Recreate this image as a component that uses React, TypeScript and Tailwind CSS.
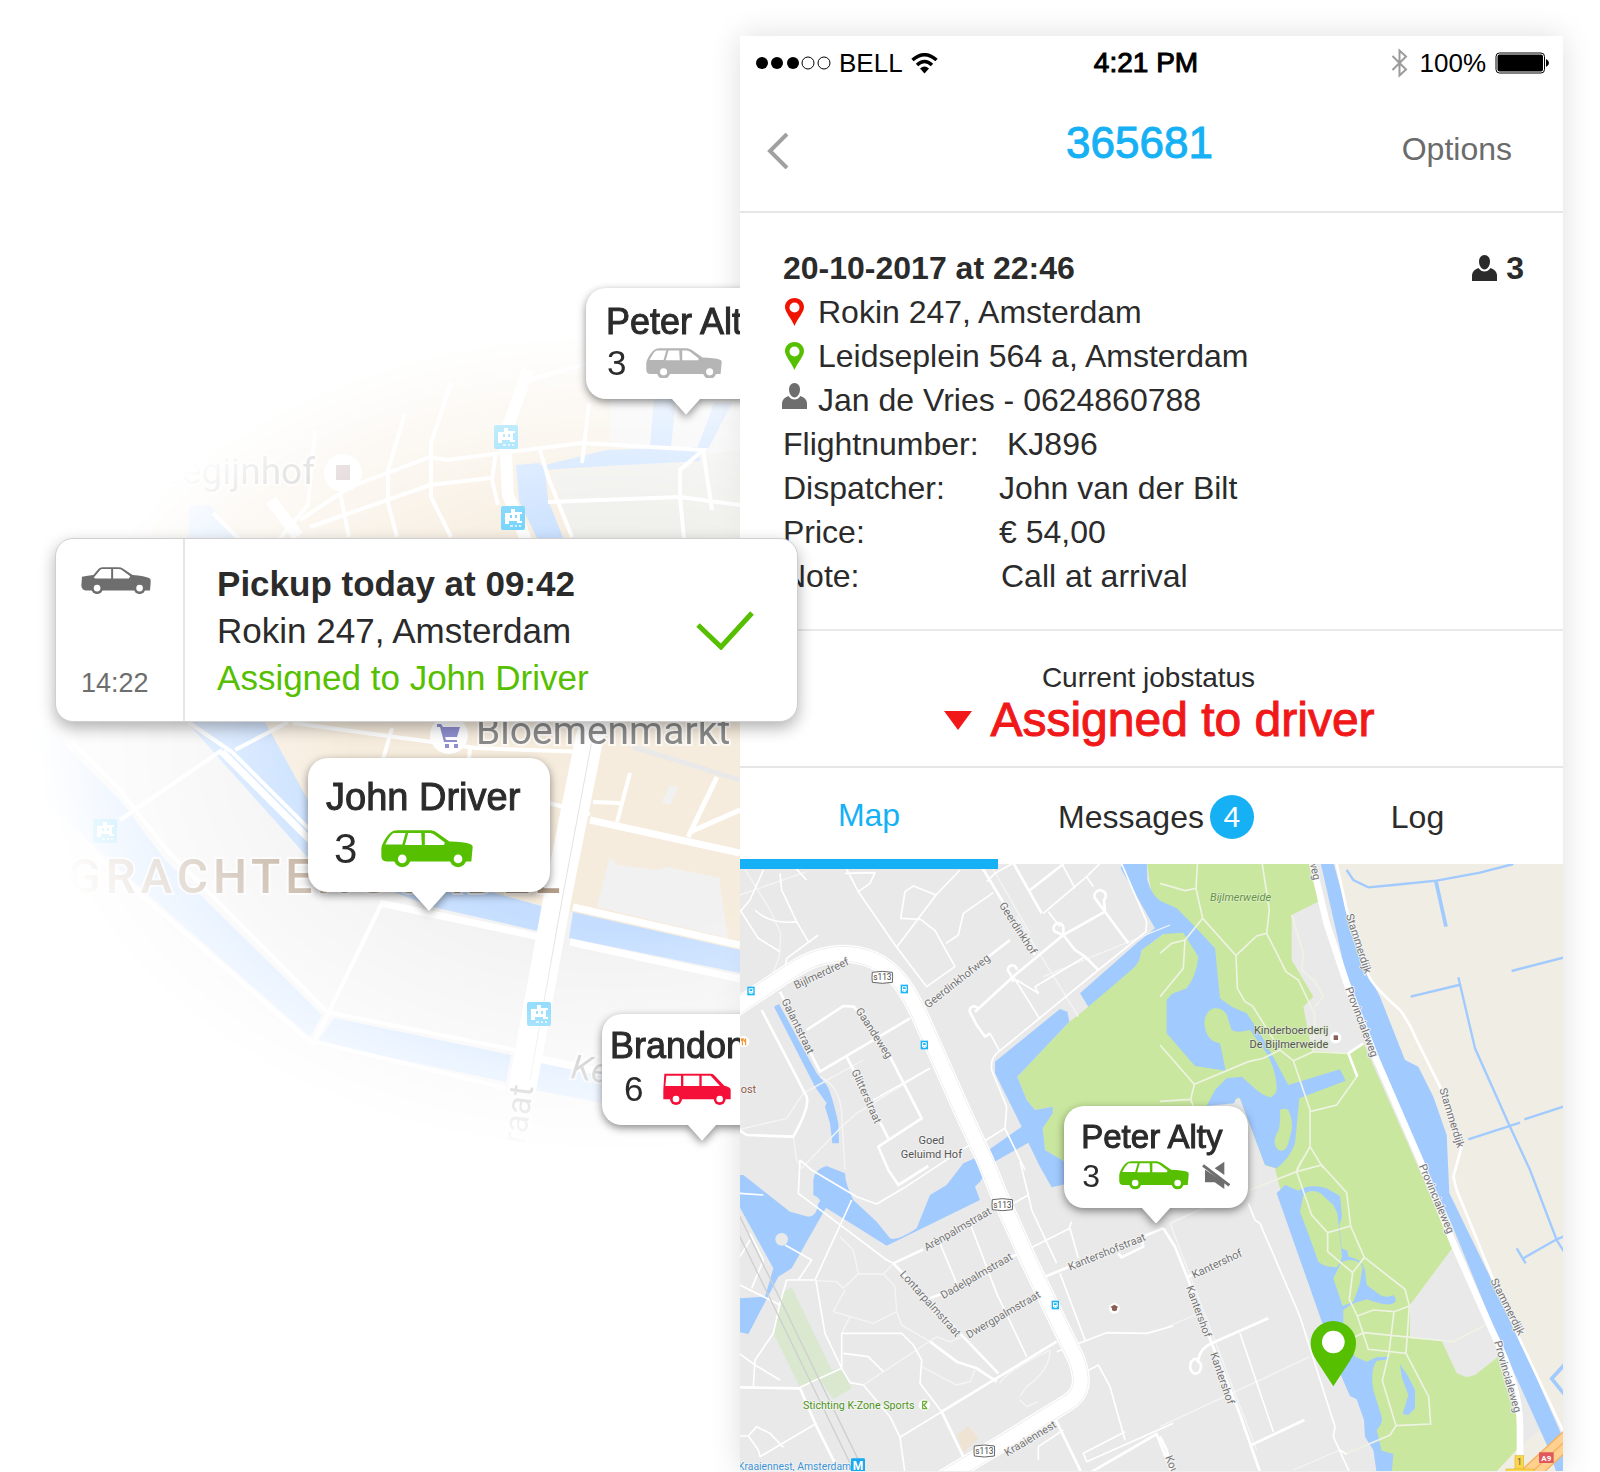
import React from "react";

const SANS = "font-['Liberation_Sans',Arial,sans-serif]";

type IconProps = { className?: string };

function WagonIcon({ className }: IconProps) {
  return (
    <svg viewBox="0 0 277 112" className={className} aria-hidden="true">
      <path fill="currentColor" d="M3 46Q14 20 28 8Q36 1 50 1H150Q160 2 170 9L206 35Q250 36 270 43Q277 46 276 52L272 95H16Q2 94 1 80V55Z" />
      <circle cx="64" cy="87" r="25" fill="currentColor" />
      <circle cx="232" cy="87" r="25" fill="currentColor" />
      <g fill="#fff">
        <circle cx="64" cy="87" r="13" />
        <circle cx="232" cy="87" r="13" />
        <path d="M13 44Q24 20 36 10L42 9H74L64 44Z" />
        <path d="M82 9H121L123 45H72Z" />
        <path d="M132 9H148Q156 10 162 15L192 38L190 45H132Z" />
      </g>
    </svg>
  );
}

function VanIcon({ className }: IconProps) {
  return (
    <svg viewBox="0 0 204 96" className={className} aria-hidden="true">
      <path fill="currentColor" d="M4 2H144Q149 2 153 6L184 38Q203 42 203 50V79H1V50Z" />
      <circle cx="39" cy="78" r="18" fill="currentColor" />
      <circle cx="170" cy="78" r="18" fill="currentColor" />
      <g fill="#fff">
        <circle cx="39" cy="78" r="10" />
        <circle cx="170" cy="78" r="10" />
        <path d="M10 8H54V39H7Z" />
        <path d="M61 8H109V39H61Z" />
        <path d="M116 8H143L171 39H116Z" />
      </g>
    </svg>
  );
}

function SedanIcon({ className }: IconProps) {
  return (
    <svg viewBox="0 0 209 82" className={className} aria-hidden="true">
      <path fill="currentColor" d="M3 29Q20 26 37 24L52 6Q56 1 64 1H112Q120 1 126 5L154 24Q190 27 206 34Q209 38 208 48L206 70H14Q2 68 1 55Z" />
      <circle cx="48" cy="63" r="18" fill="currentColor" />
      <circle cx="175" cy="63" r="18" fill="currentColor" />
      <g fill="#fff">
        <circle cx="48" cy="63" r="10" />
        <circle cx="175" cy="63" r="10" />
        <path d="M38 31L44 25L57 9Q59 6 64 6H90V34H42Z" />
        <path d="M96 6H112Q118 6 122 9L147 28L143 34H96Z" />
      </g>
    </svg>
  );
}

function MuteIcon({ className }: IconProps) {
  return (
    <svg viewBox="0 0 84 86" className={className} aria-hidden="true">
      <path fill="currentColor" d="M38 22L67 2V42Z M9 26L67 62V84L38 64H9Z" />
      <path stroke="#fff" strokeWidth="5" d="M10 9L84 64" />
      <path stroke="currentColor" strokeWidth="9" d="M3 13L82 73" />
    </svg>
  );
}

function PersonIcon({ className }: IconProps) {
  return (
    <svg viewBox="0 0 50 52" className={className} aria-hidden="true">
      <path fill="currentColor" d="M25 0C32 0 36 6 36 13C36 21 31 29 25 29C19 29 14 21 14 13C14 6 18 0 25 0Z" />
      <path fill="currentColor" d="M13 26Q18 33 25 33Q32 33 37 26Q49 30 50 40V52H0V40Q1 30 13 26Z" />
    </svg>
  );
}

function PinIcon({ className }: IconProps) {
  return (
    <svg viewBox="0 0 38 56" className={className} aria-hidden="true">
      <path fill="currentColor" fillRule="evenodd" d="M19 0C8 0 0 8 0 18C0 28 12 40 19 56C26 40 38 28 38 18C38 8 30 0 19 0ZM19 9A10 10 0 1 1 19 29A10 10 0 1 1 19 9Z" />
    </svg>
  );
}

function WifiIcon({ className }: IconProps) {
  return (
    <svg viewBox="0 0 54 42" className={className} fill="none" stroke="currentColor" strokeWidth="7" aria-hidden="true">
      <path d="M3 14Q27 -7 51 14" />
      <path d="M12 24Q27 10 42 24" />
      <path d="M27 41L18 31Q27 23 36 31Z" fill="currentColor" stroke="none" />
    </svg>
  );
}

function BluetoothIcon({ className }: IconProps) {
  return (
    <svg viewBox="0 0 34 60" className={className} fill="none" stroke="currentColor" strokeWidth="4" aria-hidden="true">
      <path d="M3 16L30 43L17 55V5L30 17L3 44" />
    </svg>
  );
}

function BatteryIcon({ className }: IconProps) {
  return (
    <svg viewBox="0 0 108 44" className={className} aria-hidden="true">
      <rect x="2" y="2" width="97" height="40" rx="7" fill="none" stroke="#000" strokeWidth="2" />
      <rect x="5" y="5" width="91" height="34" rx="4" />
      <path d="M102 14Q108 17 108 22Q108 27 102 30Z" />
    </svg>
  );
}

function Bubble({ className, tip, children }: { className: string; tip: string; children: React.ReactNode }) {
  return (
    <div className={`absolute rounded-[20px] bg-white text-[#2b2b2b] drop-shadow-[0_3px_4px_rgba(0,0,0,0.45)] ${className}`}>
      {children}
      <svg viewBox="0 0 36 20" className={`absolute left-1/2 top-full -mt-px -translate-x-1/2 ${tip}`} aria-hidden="true">
        <path d="M0 0H36L18 20Z" fill="#fff" />
      </svg>
    </div>
  );
}

function Tram({ x, y }: { x: number; y: number }) {
  return (
    <g transform={`translate(${x} ${y})`}>
      <rect width="24" height="24" rx="2" fill="#5ccbfb" />
      <path fill="#fff" d="M10 3H14V6H21V8H19V15H21V17H16V15H8V18H4V7H10Z" />
      <path fill="#5ccbfb" d="M9 9H11V12H9ZM14 9H16V12H14Z" />
      <path fill="#c9eeff" d="M9 19H12V21H9ZM14 19H16V21H14ZM18 19H20V21H18Z" />
    </g>
  );
}

function CityMap() {
  return (
    <svg
      viewBox="0 0 740 1472"
      className="block h-auto w-full [mask-image:radial-gradient(78%_28%_at_83%_50.5%,black_45%,transparent_100%)]"
      role="img"
      aria-label="City map"
    >
      <rect width="740" height="1472" fill="#f2f2f2" />
      <path fill="#f6ecdd" d="M190 300H610V440L740 470V960L570 912L430 880L320 850L222 740L150 540Z" />
      <path fill="#f2f2f2" d="M612 398H740V470L612 445Z" />
      <path fill="#edeee9" d="M552 472L700 455L740 450V538H572Z" />
      <g fill="#c5deff">
        <path d="M516 465H545L606 450L698 447L700 461L606 466L545 470L548 500L564 540H538L519 500Z" />
        <path d="M654 398H676L671 447H650Z" />
        <path d="M714 403H732L708 449H697Z" />
        <path d="M189 505H210L240 540L265 722L320 822L430 875L545 907L538 931L433 907L310 860L185 720Z" />
        <path d="M573 912L740 950V973L569 938Z" />
        <path d="M10 690L120 800L165 860L322 1015L310 1037L120 870L10 770Z" />
        <path d="M334 1018L511 1055L506 1082L317 1042Z" />
        <path d="M540 1063L740 1105V1130L535 1090Z" />
      </g>
      <path fill="#f6ecdd" d="M212 500L520 470V538L600 722H250L236 538Z" />
      <path fill="#c5deff" d="M189 513H213L237 540H194ZM516 465L540 463L545 497L562 540H538L519 500Z" />
      <path fill="#edeee9" d="M560 478L740 462V538H575Z" />
      <path fill="#f1f1f1" d="M610 857L617 865L657 870L667 867L720 878V887L728 938L597 907L603 883ZM670 785L678 788L670 805L662 802Z" />
      <g fill="none" stroke="#fff" strokeWidth="4">
        <path d="M310 527L430 485L490 478M300 520L350 487L430 457L447 460L582 443L703 450L680 470V497L684 538M703 450L712 510" />
        <path d="M451 383L431 443V497L451 537M405 413L388 470V503L397 537M589 403L582 463M540 450L548 477L572 537M340 493L349 537M548 502L680 497L740 505M315 430L308 505L280 538M213 513L240 540" />
        <path d="M496 452L492 480L498 505M528 380L600 360M235 750L288 722M120 820L222 750M293 723L476 748L586 752M392 728L380 770M470 748L468 770" />
        <path d="M188 722L232 752L312 832M500 790L590 814M593 802L620 803M630 773L617 822" />
        <path d="M382 903L325 1020L312 1045M0 670L120 790L165 848L327 1012L515 1050M95 855L308 1040L505 1088" />
      </g>
      <g fill="none" stroke="#fff" strokeWidth="7">
        <path d="M590 820L740 853M573 907L740 945M570 942L740 979M380 903L540 937M222 752L310 840M540 1059L740 1100" />
        <path strokeWidth="5" d="M717 777L688 837M690 832L740 810" />
      </g>
      <path d="M633 747L740 780" stroke="#e9e9e9" strokeWidth="5" />
      <g fill="none" stroke="#fff">
        <path strokeWidth="12" d="M528 370L505 435L508 495L526 540M271 500L298 536" />
        <path strokeWidth="28" d="M597 715L589 740L557 900L522 1090" />
        <path strokeWidth="1" stroke="#e2e2e2" d="M592 740L562 900L530 1080" />
      </g>
      <Tram x={494} y={425} />
      <Tram x={501} y={506} />
      <Tram x={93} y={819} />
      <Tram x={527} y={1002} />
      <circle cx="343" cy="473" r="19" fill="#fff" />
      <path fill="#bfa8a4" d="M336 465H350V480H336Z" />
      <circle cx="449" cy="735" r="19" fill="#fff" />
      <path fill="#8f8fd0" d="M437 724H441L443 727H460L457 737H445L446 740H457V742H444L440 727H437ZM445 744H449V748H445ZM454 744H458V748H454Z" />
      <g className="font-[Roboto,sans-serif]" stroke="#fff" strokeWidth="4" strokeOpacity="0.7" paintOrder="stroke">
        <text x="315" y="484" textAnchor="end" fontSize="37" fill="#9c9c9c">Begijnhof</text>
        <text x="476" y="744" fontSize="39" fill="#8a8a8a">Bloemenmarkt</text>
        <text x="68" y="893" fontSize="48" fontWeight="500" fill="#b39d88" className="tracking-widest">GRACHTENGORDEL</text>
        <text x="570" y="1078" fontSize="34" fontStyle="italic" fill="#a0a0a0" transform="rotate(8 570 1078)">Kerkstraat</text>
        <text x="525" y="1145" fontSize="34" fill="#909090" transform="rotate(-82 525 1145)">raat</text>
      </g>
    </svg>
  );
}

type Label = [text: string, x: number, y: number, angle: number];

const STREETS: Label[] = [
  ["Bijlmerdreef", 198, 388, -25],
  ["Geerdinkhof", 806, 136, 57],
  ["Geerdinkhofweg", 594, 446, -38],
  ["Galantstraat", 154, 422, 64],
  ["Gaandeweg", 376, 452, 57],
  ["Glitterstraat", 364, 634, 66],
  ["Arènpalmstraat", 590, 1174, -30],
  ["Lontarpalmstraat", 508, 1244, 48],
  ["Dadelpalmstraat", 640, 1318, -30],
  ["Dwergpalmstraat", 716, 1436, -30],
  ["Kantershofstraat", 1020, 1232, -22],
  ["Kraaiennest", 832, 1790, -31],
  ["Provincialeweg", 1845, 386, 69],
  ["Stammerdijk", 1847, 166, 72],
  ["Stammerdijk", 2128, 688, 73],
  ["Provincialeweg", 2066, 918, 67],
  ["Stammerdijk", 2281, 1262, 63],
  ["Provincialeweg", 2292, 1446, 74],
  ["Kantershof", 1392, 1256, -25],
  ["Kantershof", 1368, 1282, 70],
  ["Kantershof", 1440, 1482, 71],
  ["Kou", 1305, 1792, 68],
  ["weg", 1738, 2, 78],
];

function RouteBadge({ x, y }: { x: number; y: number }) {
  return (
    <g transform={`translate(${x} ${y})`}>
      <path d="M-30 -15Q0 -21 30 -15L31 0L30 15Q0 21 -30 15L-31 0Z" fill="#fff" stroke="#666" strokeWidth="3" />
      <text y="9" textAnchor="middle" fontSize="25" fill="#444">s113</text>
    </g>
  );
}

function BusStop({ x, y }: { x: number; y: number }) {
  return (
    <g transform={`translate(${x} ${y})`}>
      <rect x="-11" y="-13" width="22" height="26" fill="#19b4f5" />
      <path fill="#fff" fillRule="evenodd" d="M-6 -8H6Q7 -8 7 -6V6H5V8H-5V6H-7V-6Q-7 -8 -6 -8ZM-4 -5H4V0H-4ZM-4 3H-2V5H-4ZM2 3H4V5H2Z" />
    </g>
  );
}

function AreaMap() {
  return (
    <svg viewBox="30 12 2469 1821" className="block h-auto w-full font-[Roboto,sans-serif]" role="img" aria-label="Area map">
      <rect x="0" y="0" width="2540" height="1900" fill="#e9e9e9" />
      <g transform="translate(1290 0)">
        <path fill="#c9e79e" d="M-40 0H450L475 125 395 165V300L460 410 430 440 455 570 565 580 610 548 880 1160 750 1335V1435L845 1443 890 1540 920 1552 945 1545 1015 1490 1085 1700 1070 1770 1005 1840H690L660 1790 610 1600 500 1300 400 1060 360 985 345 925 315 915 240 715 140 738 -280 908 -345 870 -352 805 -322 740 -375 750 -400 720 -428 650 -272 485 -245 465 -215 440 -62 300 -55 270 10 222 -30 75Z" />
        <path fill="#f0ede4" d="M500 0H1220V1745L1080 1440 870 1000 600 330ZM1005 1840L1070 1770 1150 1700 1165 1765 1190 1840Z" />
        <g fill="#a1caff">
          <path d="M-118 25L-110 0H-40L-38 60Q-25 105 0 122L50 145 105 200 165 265 180 415 215 440 260 460 300 520 350 610 385 675 540 628 557 662 418 715 405 850Q390 895 350 925L315 915 240 715Q230 705 222 730L140 738 165 690 200 655 245 650 290 690Q320 715 335 710Q352 700 350 680Q348 630 320 580L270 510Q230 520 215 510L205 480Q200 445 165 444Q135 450 133 490Q138 545 180 550L197 632 105 618 20 520V420L35 402 80 385Q110 345 115 290L70 218 10 222 -55 270 -62 300 -75 320 -215 440 -240 400 -70 250 -15 205Z" />
          <path d="M480 0H518L560 150 620 340Q640 370 660 410L735 600 775 620 820 710 860 825 868 1000 985 1240 1080 1440 1220 1760V1840H1190L1165 1765 1000 1400 870 1080 800 930 645 600 555 330Z" />
          <path d="M350 1000L375 975 415 992Q450 970 500 985L540 1008 546 1070 538 1095 545 1165 562 1172 565 1190Q605 1195 615 1230L620 1275 660 1305Q680 1315 700 1306Q715 1320 700 1330Q680 1340 620 1318L575 1332 550 1350V1420L585 1490 620 1505 650 1492 685 1490V1498L650 1502Q630 1530 640 1590L665 1670Q670 1690 650 1710L665 1772 700 1782 695 1840H650L640 1770 615 1730 612 1680 590 1618 570 1608 540 1540Z" />
          <path d="M720 1512L745 1550 765 1590V1645L745 1665 728 1662 745 1605 725 1550Z" />
        </g>
        <g fill="#c9e79e">
          <path d="M360 750Q375 742 385 750Q400 785 395 810L385 850Q375 880 355 870Q335 855 350 820Q362 810 360 750Z" />
          <path d="M430 1005Q450 985 480 998L520 1035 532 1060 546 1190Q540 1220 525 1222Q490 1220 475 1205L450 1135 420 1055Z" />
          <path d="M545 1205Q590 1190 608 1220L600 1270 580 1325 548 1338 520 1255Z" />
        </g>
        <g fill="none" stroke="#a1caff" strokeWidth="7">
          <path d="M560 30L580 60 625 82 700 75 830 62 960 38 1060 12M1055 333L1210 293M752 410L897 375M895 352L945 565 1050 800 1110 930 1190 1140 1215 1180M925 838L1080 788M1093 778L1215 738M1070 1165L1097 1210M1090 1195L1190 1138 1215 1128" />
          <path strokeWidth="11" d="M828 65L858 200M1215 1512L1175 1556 1215 1605" />
        </g>
        <g fill="none" stroke="#eef3e3" strokeWidth="5">
          <path d="M0 70L75 92 108 85 113 0M108 85L128 175 228 287 290 228 320 220 328 150 305 0M320 220L378 335 415 360 465 465 460 575M228 287L232 385 255 425 278 438 360 570 400 602 450 750V860L410 930M128 175L75 240 70 325 0 410M75 240L35 250 0 280M0 555L103 673 265 605 310 595 360 570M103 673L92 718 0 724M400 602L460 575 565 580M92 718L100 738M450 755L530 735 590 650M450 860L490 925M395 165L430 280 425 330 465 365 490 410 465 440" />
          <path d="M270 990L410 935 485 915M410 935L425 900M485 915L560 998 572 1098 613 1192 578 1238 503 1175V1118L572 1098M503 1118L455 1065 410 935M613 1192L735 1288 748 1338 702 1355 640 1350 592 1368 568 1318 578 1238M592 1368L625 1468 738 1480 748 1338M702 1355L687 1478 667 1562 708 1697 812 1692 806 1610 738 1480M585 1430L612 1418 880 1445 975 1395M708 1697L690 1725 555 1783" />
        </g>
      </g>
      <g fill="#a1caff">
        <path d="M990 447L1012 455 1018 485 862 650 890 720 915 750 968 740 968 760 938 805 945 870 1010 908 1060 960 965 982 930 920 895 848 750 930 690 930 875 800 795 640V605Z" />
        <path d="M745 890L700 910 650 975 600 1005 560 1105Q500 1145 480 1135L440 1085 370 1020Q345 970 345 940L290 918Q250 930 250 965V1005Q280 1020 265 1030Q260 1070 235 1070L180 1055 40 945H20V1025L130 1225 105 1310 20 1315V1415L55 1422 145 1250 185 1225 288 1043 470 1157 750 1020 735 980 750 965 790 905 880 840Z" />
        <path d="M132 440L147 432 260 640 290 675Q305 700 325 790L327 850H307L300 790 285 740 290 730 255 680Z" />
      </g>
      <path fill="#d9e8cf" d="M155 1300L185 1282 305 1530 335 1525 365 1585 310 1618 270 1560 210 1582 130 1420Z" />
      <path fill="#efe3d3" d="M680 1725L715 1698 745 1735 700 1778Z" />
      <circle cx="155" cy="1138" r="19" fill="#e9e9e9" />
      <g fill="none" stroke="#f5f5f5" strokeWidth="4">
        <path d="M30 105L230 35M35 12L120 150 152 220 148 290 125 350M30 808L170 775 220 700 400 600M860 170L1045 470M270 650Q330 680 335 760L345 930M190 830L200 900 215 925 335 800 380 760 600 625M780 12L900 220M940 350L1320 195M258 1262L320 1265 340 1285 385 1242H460L495 1280 500 1355 430 1390 360 1370 310 1355 345 1290M500 1355L515 1395 600 1445M360 1370L335 1420M385 1242L370 1170 330 1130M460 1242L490 1210M400 1575L620 1430 660 1445 700 1430M575 1520L680 1575 720 1565 735 1530M870 1620L890 1640 925 1625M810 1570Q820 1540 960 1470Q960 1530 890 1580L870 1610" />
        <path d="M1320 1090L1430 1040M1320 1090L1580 1770M1290 1410L1395 1365M1290 1700L1740 1490M1690 1830L1830 1770" />
      </g>
      <g fill="none" stroke="#fff" strokeWidth="5" strokeLinejoin="round">
        <path d="M350 28L385 95 500 262 590 380 675 320 615 212 572 178 512 175 525 95 550 78 618 105 500 262M618 105L690 30M345 40L435 38 420 70 385 95M648 250L685 225 700 160 790 98M75 150Q120 195 200 185M30 150L85 235 150 275M150 40L155 90 200 185 235 245M30 155L60 120 100 30M185 12L230 60" />
        <path d="M165 320L170 295 265 225M770 65L795 40 845 12M990 0L1035 85M940 160L1070 50 1120 0M955 155L990 200M1170 0L1250 185 1248 215 1105 330 800 580Q780 600 785 630L830 740 825 805 720 870M825 805L885 930M850 350L930 478M860 360L925 400 915 380 1065 290M780 520L808 572M1070 50L1090 80" />
        <path d="M430 720L600 625M575 445L600 430M210 900L205 1000 470 1200 490 1210M210 900L245 930 380 1010 440 1032 520 985 725 850M365 1020L255 1260H170L150 1330 130 1420 75 1500 70 1580M205 1260L245 1200 165 1155M258 1262L285 1420 335 1525V1420M335 1525L210 1582M335 1525L360 1568 400 1575 480 1670 510 1732 525 1840M510 1732L635 1655M335 1420H515L550 1455 575 1500 570 1570 635 1655M30 1000L100 1005M340 1480L415 1490 460 1535M30 1482L75 1515 150 1560" />
        <path d="M630 1150L680 1270M720 1090L800 1300 890 1490M990 1240L1065 1440M870 905L895 1005 905 1050 980 1210M900 1165L1020 1105 1045 1195M1025 1085L1015 1110M815 1050L895 1005M980 1475L1130 1418 1250 1420 1330 1398M30 1728H55L80 1700 120 1720 160 1762M55 1728L85 1770 90 1790 260 1690M1060 1540L1105 1515 1140 1580 1185 1740M1185 1715L1060 1780 1070 1805 1330 1690M60 1120L100 1200 65 1285M30 1190L60 1140M30 1275L150 1335M925 1800V1760L1000 1710" />
        <path d="M1555 1030L1575 1080 1590 1090 1710 1370 1815 1700 1810 1730 1860 1840M1530 1420L1630 1715M1850 1783L1830 1770" />
      </g>
      <g fill="none" stroke="#fff" strokeWidth="8" strokeLinejoin="round">
        <path d="M750 12L800 95 915 285M845 0L935 160M900 90L1000 12M1125 155L1195 250M1125 155L1000 225 855 345 735 455M1125 155L1122 120A17 17 0 1 0 1095 115L1125 155M1000 225L1000 200A15 15 0 1 0 975 215L1000 225 1035 270 1065 290 1105 330M860 330A13 13 0 1 0 840 340L850 365M745 450A13 13 0 1 0 722 460L740 495 765 530 780 520" />
        <path d="M575 445L840 240M95 450L230 710Q240 740 190 830L50 825 20 805M150 395L270 635 540 475M230 510L340 438 372 440 480 590 575 775 445 860 475 930 505 975 595 918M350 590L475 835M490 1210L580 1168M490 1210L690 1420 805 1540M600 1315L640 1300M830 1195L870 1180M600 1445L680 1505 740 1525 800 1565M635 1655L980 1445M635 1655L700 1790M20 1582L210 1585 260 1700 335 1850M975 1675L1060 1850M1060 1850L1280 1722 1330 1850" />
        <path d="M945 1250L1300 1105M1300 1105L1335 1160 1375 1260 1445 1450 1525 1650 1595 1850M1165 1180L1175 1192 1240 1160 1235 1140M1375 1250L1535 1175M1445 1450L1615 1375M1560 1757L1723 1680M1445 1450Q1410 1465 1405 1500A16 22 0 1 0 1412 1512L1400 1500M1290 1730L1310 1770 1325 1836" />
        <path d="M1855 580L1882 650M1855 580L1900 550M1820 12L1850 150 1915 345Q1930 380 2010 450Q2040 490 2060 540L2130 680 2195 860 2170 950 2180 990 2290 1260 2370 1440 2500 1715" />
      </g>
      <path fill="none" stroke="#fff" strokeWidth="20" d="M1745 0L1790 190 1850 370 1940 600 2070 900 2170 1150 2290 1420Q2370 1580 2370 1700V1800" />
      <g fill="none">
        <path stroke="#fff" strokeWidth="54" d="M0 455L180 335C260 280 350 265 430 300C500 330 540 400 580 490L700 760 765 900 810 1010 900 1210 1040 1500C1060 1560 1060 1600 1010 1630L840 1735 640 1855" />
        <path stroke="#ebebeb" strokeWidth="46" d="M0 455L180 335C260 280 350 265 430 300C500 330 540 400 580 490L700 760 765 900 810 1010 900 1210 1040 1500C1060 1560 1060 1600 1010 1630L840 1735 640 1855" />
        <path stroke="#fff" strokeWidth="42" d="M0 455L180 335C260 280 350 265 430 300C500 330 540 400 580 490L700 760 765 900 810 1010 900 1210 1040 1500C1060 1560 1060 1600 1010 1630L840 1735 640 1855" />
        <path stroke="#cfcfcf" strokeWidth="4" d="M20 1050L390 1810 405 1840M20 1110L375 1840" />
        <path stroke="#f4b25f" strokeWidth="54" d="M2380 1860L2520 1730" />
        <path stroke="#ffd08f" strokeWidth="46" d="M2380 1860L2520 1730" />
        <path stroke="#f4b25f" strokeWidth="4" d="M2380 1860L2520 1730" />
      </g>

      <BusStop x={63} y={393} />
      <BusStop x={523} y={387} />
      <BusStop x={583} y={555} />
      <BusStop x={976} y={1335} />
      <RouteBadge x={457} y={352} />
      <RouteBadge x={817} y={1034} />
      <RouteBadge x={763} y={1773} />

      <g fill="#757575" stroke="#f4f4f4" strokeWidth="5" paintOrder="stroke" fontSize="33">
        {STREETS.map(([text, x, y, angle], i) => (
          <text key={i} x={x} y={y} transform={`rotate(${angle} ${x} ${y})`}>{text}</text>
        ))}
      </g>
      <g stroke="#f4f4f4" strokeWidth="5" paintOrder="stroke" fontSize="33" fill="#555">
        <text x="604" y="851" textAnchor="middle">Goed</text>
        <text x="604" y="893" textAnchor="middle">Geluimd Hof</text>
        <text x="32" y="700" fill="#8d5a4e">ost</text>
        <text x="219" y="1646" fontSize="32" fill="#4f9420">Stichting K-Zone Sports</text>
        <text x="24" y="1829" fontSize="31" fill="#3d93d6">Kraaiennest, Amsterdam</text>
      </g>
      <g fontSize="33" fill="#555" stroke="#dfeccb" strokeWidth="4" paintOrder="stroke">
        <text x="1440" y="122" fontStyle="italic" fill="#62943a">Bijlmerweide</text>
        <text x="1795" y="522" textAnchor="end">Kinderboerderij</text>
        <text x="1795" y="564" textAnchor="end">De Bijlmerweide</text>
      </g>
      <circle cx="1817" cy="533" r="17" fill="#fff" />
      <rect x="1811" y="526" width="13" height="14" fill="#8a5f55" />
      <circle cx="41" cy="545" r="17" fill="#fff" />
      <path stroke="#f08a1d" strokeWidth="3" fill="none" d="M34 535V542Q37 547 40 542V535M37 535V556M47 556V536Q43 538 44 546" />
      <circle cx="1153" cy="1345" r="16" fill="#fff" />
      <path fill="#8a5f55" d="M1141 1341L1153 1334 1165 1341 1161 1344V1351Q1153 1356 1146 1351V1344Z" />
      <circle cx="583" cy="1635" r="17" fill="#fff" />
      <path fill="none" stroke="#6fb03a" strokeWidth="4" d="M577 1624H592M578 1624V1646H592M591 1626L582 1635 590 1645" />
      <rect x="363" y="1795" width="42" height="46" rx="4" fill="#19a9f0" />
      <text x="384" y="1831" textAnchor="middle" fontSize="36" fontWeight="700" fill="#fff">M</text>
      <rect x="2355" y="1787" width="26" height="40" fill="#fbd749" stroke="#e2b93a" strokeWidth="2" />
      <rect x="2328" y="1827" width="82" height="20" fill="#fbd749" stroke="#e2b93a" strokeWidth="2" />
      <text x="2368" y="1816" textAnchor="middle" fontSize="26" fill="#555">1</text>
      <rect x="2427" y="1777" width="44" height="32" rx="2" fill="#e0585c" />
      <text x="2449" y="1802" textAnchor="middle" fontSize="24" fontWeight="700" fill="#fff">A9</text>

      <path fill="#55bf00" d="M1810 1383A68 66 0 0 1 1878 1449C1878 1475 1866 1492 1856 1508L1810 1579 1764 1508C1754 1492 1742 1475 1742 1449A68 66 0 0 1 1810 1383Z" />
      <circle cx="1810" cy="1446" r="34" fill="#fff" />
    </svg>
  );
}

function StatusBar() {
  return (
    <div className="grid h-[54px] grid-cols-[1fr_auto_1fr] items-center pl-[15px] pr-[14px] text-[26px] leading-none text-black">
      <div className="flex items-center">
        <svg viewBox="0 0 76 14" className="mr-2 h-[14px] w-[76px]" aria-label="Signal">
          <circle cx="7" cy="7" r="6" />
          <circle cx="22" cy="7" r="6" />
          <circle cx="38" cy="7" r="6" />
          <circle cx="53" cy="7" r="6" fill="none" stroke="#000" />
          <circle cx="69" cy="7" r="6" fill="none" stroke="#000" />
        </svg>
        <span>BELL</span>
        <WifiIcon className="ml-2 h-[21px] w-[27px]" />
      </div>
      <span className="pr-3 text-[28px] [-webkit-text-stroke:1px_black]">4:21 PM</span>
      <div className="flex items-center justify-end">
        <BluetoothIcon className="mr-3 h-[30px] w-[17px] text-[#9b9b9b]" />
        <span>100%</span>
        <BatteryIcon className="ml-[9px] h-[22px] w-[54px]" />
      </div>
    </div>
  );
}

const DETAILS = [
  { label: "Flightnumber:", value: "KJ896", cls: "pl-2" },
  { label: "Dispatcher:", value: "John van der Bilt", cls: "" },
  { label: "Price:", value: "€ 54,00", cls: "" },
  { label: "Note:", value: "Call at arrival", cls: "pl-0.5" },
];

function Phone() {
  return (
    <main className="relative z-10 overflow-hidden bg-white text-[#2b2b2b]">
      <StatusBar />
      <header className="grid h-[123px] grid-cols-[1fr_auto_1fr] items-center border-b-2 border-[#e6e6e6] pl-[27px] pr-[51px]">
        <button type="button" aria-label="Back" className="justify-self-start">
          <svg viewBox="0 0 22 36" className="h-9 w-[22px]" fill="none" stroke="#a0a0a0" strokeWidth="4">
            <path d="M20 1L3 18L20 35" />
          </svg>
        </button>
        <h1 className="pb-4 text-[44px] leading-none text-[#16b1f5] [-webkit-text-stroke:1px_#16b1f5]">365681</h1>
        <button type="button" className="justify-self-end pb-1 text-[32px] leading-none text-[#6b6b6b]">Options</button>
      </header>

      <section className="border-b-2 border-[#e9e9e9] pb-[31px] pl-[43px] pr-[39px] pt-[33px] text-[32px] leading-[44px]">
        <div className="flex justify-between font-bold">
          <h2>20-10-2017 at 22:46</h2>
          <span className="flex items-center gap-[9px]">
            <PersonIcon className="h-[26px] w-[25px]" />3
          </span>
        </div>
        <p className="flex items-center"><PinIcon className="ml-[2px] mr-[14px] h-7 w-[19px] text-[#f01400]" />Rokin 247, Amsterdam</p>
        <p className="flex items-center"><PinIcon className="ml-[2px] mr-[14px] h-7 w-[19px] text-[#55bf00]" />Leidseplein 564 a, Amsterdam</p>
        <p className="flex items-center"><PersonIcon className="-ml-px mb-2 mr-[11px] h-[26px] w-[25px] text-[#6e6e6e]" />Jan de Vries - 0624860788</p>
        <dl>
          {DETAILS.map((d) => (
            <div key={d.label} className="grid grid-cols-[216px_1fr]">
              <dt>{d.label}</dt>
              <dd className={d.cls}>{d.value}</dd>
            </div>
          ))}
        </dl>
      </section>

      <section className="flex h-[137px] flex-col items-center border-b-2 border-[#e6e6e6] pt-[31px]">
        <p className="pr-1.5 text-[28px] leading-8">Current jobstatus</p>
        <button type="button" className="flex items-center gap-[18px] pl-4 text-[48px] leading-[52px] text-[#f01818] [-webkit-text-stroke:1px_#f01818]">
          <svg viewBox="0 0 28 19" className="h-[19px] w-7" aria-hidden="true">
            <path d="M0 0H28L14 19Z" fill="currentColor" stroke="none" />
          </svg>
          Assigned to driver
        </button>
      </section>

      <nav className="relative z-10 grid h-[96px] grid-cols-[258fr_316fr_249fr] text-[32px] leading-none">
        <button type="button" className="relative pb-0.5 text-[#16b1f5]">
          Map
          <span className="absolute inset-x-0 -bottom-[5px] h-2.5 bg-[#16b1f5]" />
        </button>
        <button type="button" className="flex items-center justify-center gap-1.5 pt-0.5">
          Messages
          <span className="flex size-11 items-center justify-center rounded-full bg-[#16b1f5] text-[30px] text-white">4</span>
        </button>
        <button type="button" className="pr-[42px] pt-0.5">Log</button>
      </nav>

      <div className="relative">
        <AreaMap />
        <Bubble className="left-[39.4%] top-[39.8%] h-[102px] w-[184px] px-[17px] pt-3" tip="w-[30px]">
          <p className="whitespace-nowrap text-[33px] leading-[38px] [-webkit-text-stroke:1px_#2b2b2b]">Peter Alty</p>
          <div className="flex items-center pl-px text-[32px] leading-10">
            3
            <WagonIcon className="ml-[19px] w-[70px] text-[#55bf00]" />
            <MuteIcon className="ml-[13px] w-7 text-[#6e6e6e]" />
          </div>
        </Bubble>
      </div>
    </main>
  );
}

export default function App() {
  return (
    <div className={`relative grid min-h-screen grid-cols-[740fr_823fr_37fr] items-start overflow-hidden bg-white ${SANS}`}>
      <section className="relative overflow-hidden">
        <CityMap />
        <Bubble className="left-[586px] top-[288px] h-[111px] w-[200px] pl-5 pt-[14px]" tip="w-[30px]">
          <p className="whitespace-nowrap text-[36px] leading-10 [-webkit-text-stroke:1px_#2b2b2b]">Peter Alty</p>
          <div className="flex items-center pl-px text-[35px] leading-[42px]">
            3
            <WagonIcon className="ml-5 w-[76px] text-[#b5b5b5]" />
          </div>
        </Bubble>
        <Bubble className="left-[308px] top-[758px] h-[134px] w-[242px] pl-[18px] pt-[14px]" tip="w-[36px]">
          <p className="whitespace-nowrap text-[38px] leading-[50px] [-webkit-text-stroke:1px_#2b2b2b]">John Driver</p>
          <div className="flex items-center pl-2 text-[42px] leading-[54px]">
            3
            <WagonIcon className="ml-6 w-[92px] text-[#55bf00]" />
          </div>
        </Bubble>
        <Bubble className="left-[602px] top-[1014px] h-[111px] w-[200px] pl-2 pt-3" tip="w-[30px]">
          <p className="whitespace-nowrap text-[36px] leading-10 [-webkit-text-stroke:1px_#2b2b2b]">Brandon</p>
          <div className="flex items-center pl-[14px] text-[35px] leading-[46px]">
            6
            <VanIcon className="ml-5 w-[68px] text-[#f5103a]" />
          </div>
        </Bubble>
      </section>

      <div className="mt-9 shadow-[0_0_30px_rgba(0,0,0,0.13)]">
        <Phone />
      </div>

      <article className="absolute left-[3.44%] top-[538px] z-20 flex w-[46.44%] rounded-[18px] border border-[#cfcfcf] bg-white text-[#2b2b2b] shadow-[0_6px_16px_rgba(0,0,0,0.3)]">
        <div className="flex w-[129px] shrink-0 flex-col justify-between border-r-2 border-[#e6e6e6] pb-5 pl-[25px] pt-7 text-[#6e6e6e]">
          <SedanIcon className="w-[70px]" />
          <time className="text-[27px] leading-9">14:22</time>
        </div>
        <div className="flex-1 pb-5 pl-8 pt-[21px] text-[35px] leading-[47px]">
          <h2 className="font-bold">Pickup today at 09:42</h2>
          <p>Rokin 247, Amsterdam</p>
          <p className="text-[#55bf00]">Assigned to John Driver</p>
        </div>
        <svg viewBox="0 0 58 39" className="mr-[43px] w-[58px] self-center" fill="none" stroke="#55bf00" strokeWidth="5" aria-label="Confirmed">
          <path d="M2 14L25 36L56 2" />
        </svg>
      </article>
    </div>
  );
}
